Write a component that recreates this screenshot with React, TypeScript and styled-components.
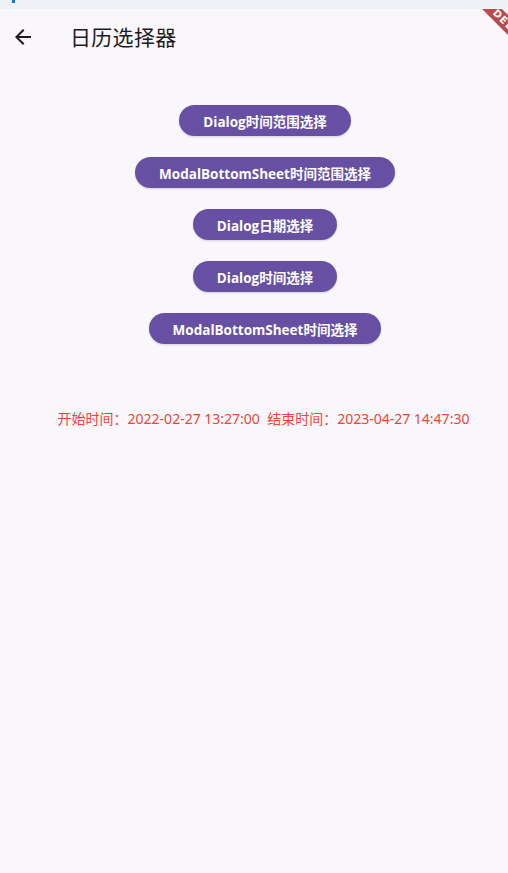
import React from 'react';
import styled, { createGlobalStyle } from 'styled-components';

const GlobalStyle = createGlobalStyle`
  html, body {
    margin: 0;
    padding: 0;
    background: #f9f7fb;
  }
  body {
    font-family: "Open Sans", "Noto Sans CJK SC", sans-serif;
  }
`;

const buttons = [
  'Dialog时间范围选择',
  'ModalBottomSheet时间范围选择',
  'Dialog日期选择',
  'Dialog时间选择',
  'ModalBottomSheet时间选择',
];

const BackIcon = () => (
  <svg width="24" height="24" viewBox="0 0 24 24">
    <path
      d="M20 11H7.83l5.59-5.59L12 4l-8 8 8 8 1.41-1.41L7.83 13H20v-2z"
      fill="#1d1b20"
    />
  </svg>
);

const App: React.FC = () => (
  <>
    <GlobalStyle />
    <Page>
      <StatusBar>
        <StatusMark />
      </StatusBar>
      <AppBar>
        <BackButton>
          <BackIcon />
        </BackButton>
        <Title>日历选择器</Title>
      </AppBar>
      <Body>
        {buttons.map((label) => (
          <PillButton key={label}>{label}</PillButton>
        ))}
        <Result>
          开始时间：2022-02-27 13:27:00&nbsp;&nbsp;结束时间：2023-04-27 14:47:30
        </Result>
      </Body>
      <BannerClip>
        <Banner>DEBUG</Banner>
      </BannerClip>
    </Page>
  </>
);

const Page = styled.div`
  position: relative;
  width: 508px;
  height: 873px;
  overflow: hidden;
  background: #f9f7fb;
`;

const StatusBar = styled.div`
  height: 9px;
  background: #eef2f6;
  position: relative;
`;

const StatusMark = styled.div`
  position: absolute;
  left: 12px;
  top: 0;
  width: 3px;
  height: 3px;
  background: #1f6fd1;
`;

const AppBar = styled.div`
  height: 56px;
  display: flex;
  align-items: center;
  padding-left: 11px;
`;

const BackButton = styled.div`
  width: 24px;
  height: 24px;
  display: flex;
  align-items: center;
  justify-content: center;
  margin-right: 35px;
`;

const Title = styled.div`
  font-family: "Noto Sans CJK SC", sans-serif;
  font-size: 21px;
  font-weight: 400;
  color: #1d1b20;
  letter-spacing: 0.3px;
  margin-top: -2px;
`;

const Body = styled.div`
  display: flex;
  flex-direction: column;
  align-items: center;
  padding-top: 40px;
  padding-left: 22px;
  gap: 21px;
`;

const PillButton = styled.div`
  height: 31px;
  padding: 0 24px;
  border-radius: 16px;
  background: #6750a4;
  color: #ffffff;
  display: flex;
  align-items: center;
  font-family: "Open Sans", "Noto Sans CJK SC", sans-serif;
  font-size: 13.5px;
  font-weight: 700;
  box-shadow: 0 1px 2px rgba(0, 0, 0, 0.15);
`;

const Result = styled.div`
  margin-top: 43px;
  margin-right: 3px;
  font-family: "Noto Sans", "Noto Sans CJK SC", sans-serif;
  font-size: 14px;
  color: #f44336;
  white-space: nowrap;
`;

const BannerClip = styled.div`
  position: absolute;
  top: 9px;
  right: 0;
  width: 60px;
  height: 60px;
  overflow: hidden;
  pointer-events: none;
`;

const Banner = styled.div`
  position: absolute;
  top: 11px;
  right: -62px;
  width: 120px;
  height: 14px;
  background: rgba(160, 0, 0, 0.7);
  color: #ffffff;
  font-family: "DejaVu Sans", sans-serif;
  font-size: 10px;
  font-weight: 900;
  line-height: 14px;
  text-align: center;
  letter-spacing: 1px;
  transform: rotate(45deg);
  transform-origin: center;
`;

export default App;
